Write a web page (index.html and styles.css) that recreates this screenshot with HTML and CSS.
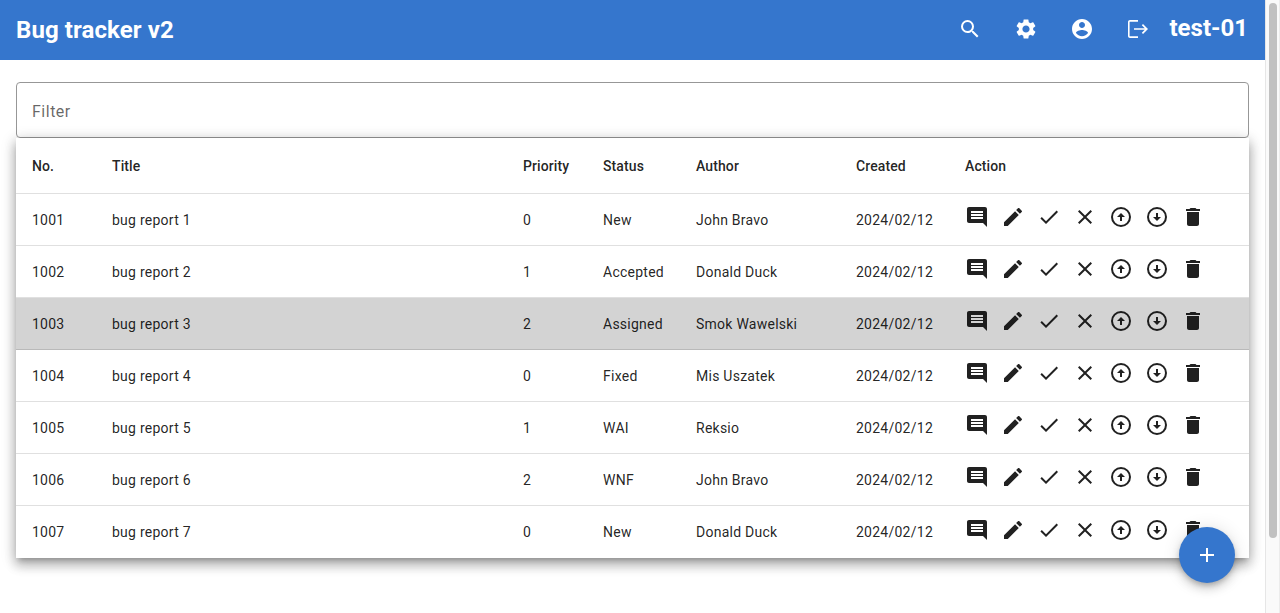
FILE: index.html
```html
<!DOCTYPE html>
<html lang="en">
<head>
<meta charset="utf-8">
<title>Bug tracker v2</title>
<link rel="stylesheet" href="styles.css">
</head>
<body>
<svg class="sprite" aria-hidden="true">
  <symbol id="comment" viewBox="0 0 24 24"><path d="M21.99 4c0-1.1-.89-2-1.99-2H4c-1.1 0-2 .9-2 2v12c0 1.100.9 2 2 2h14l4 4-.01-18zM18 14H6v-2h12v2zm0-3H6V9h12v2zm0-3H6V6h12v2z"/></symbol>
  <symbol id="edit" viewBox="0 0 24 24"><path d="M3 17.250V21h3.750L17.810 9.940l-3.750-3.750L3 17.250zM20.710 7.040c.39-.39.39-1.020 0-1.410l-2.340-2.340c-.39-.39-1.020-.39-1.410 0l-1.830 1.830 3.750 3.750 1.830-1.830z"/></symbol>
  <symbol id="check" viewBox="0 0 24 24"><path d="M9 16.170L4.830 12l-1.420 1.410L9 19 21 7l-1.410-1.410z"/></symbol>
  <symbol id="close" viewBox="0 0 24 24"><path d="M19 6.410L17.590 5 12 10.590 6.410 5 5 6.410 10.590 12 5 17.590 6.410 19 12 13.410 17.590 19 19 17.590 13.410 12z"/></symbol>
  <symbol id="up" viewBox="0 0 24 24"><circle cx="12" cy="12" r="9" fill="none" stroke="currentColor" stroke-width="2"/><path d="M11 12v4h2v-4h3l-4-4-4 4z"/></symbol>
  <symbol id="down" viewBox="0 0 24 24"><circle cx="12" cy="12" r="9" fill="none" stroke="currentColor" stroke-width="2"/><path d="M11 8v4H8l4 4 4-4h-3V8z"/></symbol>
  <symbol id="delete" viewBox="0 0 24 24"><path d="M6 19c0 1.100.9 2 2 2h8c1.100 0 2-.9 2-2V7H6v12zM19 4h-3.500l-1-1h-5l-1 1H5v2h14V4z"/></symbol>
</svg>
<div class="window">
  <div class="page">
    <header class="toolbar">
      <h1 class="brand">Bug tracker v2</h1>
      <nav class="tools">
        <svg class="icon" viewBox="0 0 24 24"><path d="M15.500 14h-.79l-.28-.27A6.471 6.471 0 0 0 16 9.500 6.500 6.500 0 1 0 9.500 16c1.610 0 3.090-.59 4.230-1.570l.27.28v.79l5 4.990L20.490 19l-4.990-5zm-6 0C7.010 14 5 11.990 5 9.500S7.010 5 9.500 5 14 7.010 14 9.500 11.990 14 9.500 14z"/></svg>
        <svg class="icon" viewBox="0 0 24 24"><path d="M19.140 12.940c.04-.3.06-.61.06-.94 0-.32-.02-.64-.07-.94l2.030-1.580c.18-.14.23-.41.12-.61l-1.920-3.320c-.12-.22-.37-.29-.59-.22l-2.390.96c-.5-.38-1.030-.7-1.620-.94l-.36-2.540c-.04-.24-.24-.41-.48-.41h-3.840c-.24 0-.43.17-.47.41l-.36 2.540c-.59.24-1.130.57-1.620.94l-2.390-.96c-.22-.08-.47 0-.59.22L2.740 8.870c-.12.21-.08.47.12.61l2.030 1.580c-.05.3-.09.63-.09.94s.02.64.07.94l-2.030 1.580c-.18.14-.23.41-.12.61l1.920 3.320c.12.22.37.29.59.22l2.390-.96c.5.38 1.030.7 1.620.94l.36 2.540c.05.24.24.41.48.41h3.840c.24 0 .44-.17.47-.41l.36-2.540c.59-.24 1.130-.56 1.620-.94l2.390.96c.22.08.47 0 .59-.22l1.920-3.320c.12-.22.07-.47-.12-.61l-2.010-1.580zM12 15.600c-1.980 0-3.600-1.620-3.600-3.600s1.620-3.600 3.600-3.600 3.600 1.620 3.600 3.600-1.620 3.600-3.600 3.600z"/></svg>
        <svg class="icon" viewBox="0 0 24 24"><path d="M12 2C6.480 2 2 6.480 2 12s4.480 10 10 10 10-4.480 10-10S17.520 2 12 2zm0 3c1.660 0 3 1.340 3 3s-1.340 3-3 3-3-1.340-3-3 1.340-3 3-3zm0 14.200c-2.500 0-4.710-1.280-6-3.220.03-1.990 4-3.080 6-3.080 1.990 0 5.970 1.090 6 3.080-1.290 1.940-3.500 3.220-6 3.220z"/></svg>
        <svg class="icon" viewBox="0 0 24 24"><path d="M17 7l-1.200 1.200L18.750 11.200H8v1.600h10.750l-2.950 3L17 17l5-5zM4 4.700h8V3H4c-1.100 0-2 .9-2 2v14c0 1.100.9 2 2 2h8v-1.700H4c-.2 0-.4-.2-.4-.4V5.100c0-.2.2-.4.4-.4z"/></svg>
      </nav>
      <h2 class="user">test-01</h2>
    </header>
    <main class="content">
      <label class="filter">Filter</label>
      <section class="table" id="table">
        <div class="row head"><span>No.</span><span>Title</span><span>Priority</span><span>Status</span><span>Author</span><span>Created</span><span>Action</span></div>
      </section>
    </main>
    <button class="fab" aria-label="Add"><svg class="icon" viewBox="0 0 24 24"><path d="M19 13h-6v6h-2v-6H5v-2h6V5h2v6h6v2z"/></svg></button>
  </div>
  <div class="scrollbar"><div class="thumb"></div></div>
</div>
<script src="app.js"></script>
</body>
</html>
```
FILE: styles.css
```css
* { box-sizing: border-box; }
body { margin: 0; overflow: hidden; background: #fff; color: rgba(0,0,0,.87); font-family: Roboto, sans-serif; }
.sprite { display: none; }
.icon { width: 24px; height: 24px; fill: currentColor; display: block; flex: none; }
.window { display: flex; height: 613px; }
.page { flex: 1; position: relative; overflow: hidden; }
.toolbar { height: 60px; padding: 0 17px 0 16px; display: flex; align-items: center; background: #3576cd; color: #fff; }
.brand, .user { margin: 0; font-size: 24px; line-height: 32px; font-weight: 700; white-space: nowrap; }
.brand { flex: 1; letter-spacing: .1px; }
.user { padding-bottom: 4px; letter-spacing: 0; }
.tools { display: flex; gap: 32px; padding-bottom: 2px; margin-right: 19px; }
.content { padding: 22px 16px 0; }
.filter { display: flex; align-items: center; height: 56px; padding: 3px 15px 0; border: 1px solid #979797; border-radius: 4px; font-size: 16px; letter-spacing: .5px; color: rgba(0,0,0,.6); }
.table { background: #fff; box-shadow: 0 5px 5px -3px rgba(0,0,0,.2), 0 8px 10px 1px rgba(0,0,0,.14), 0 3px 14px 2px rgba(0,0,0,.12), 0 3px 12px rgba(0,0,0,.14); }
.row { display: grid; grid-template-columns: 80px 411px 80px 93px 160px 109px 1fr; align-items: center; height: 52px; border-bottom: 1px solid rgba(0,0,0,.12); font-size: 14px; line-height: 20px; letter-spacing: .25px; }
.row > * { padding-left: 16px; white-space: nowrap; }
.row > span { letter-spacing: .25px; }
.row.head { height: 56px; font-weight: 500; line-height: 22px; }
.row.head > span { letter-spacing: .1px; }
.row.selected { background: #d3d3d3; }
.row:last-child { border-bottom: 0; }
.actions { display: flex; gap: 12px; padding-bottom: 5px; }
.fab { position: absolute; right: 30px; bottom: 30px; width: 56px; height: 56px; padding: 0; border: 0; border-radius: 50%; display: grid; place-items: center; background: #3576cd; color: #fff; box-shadow: 0 3px 5px -1px rgba(0,0,0,.2), 0 6px 10px rgba(0,0,0,.14), 0 1px 18px rgba(0,0,0,.12); }
.scrollbar { width: 15px; background: #fafafa; border-left: 1px solid #e6e6e6; border-right: 1px solid #ececec; padding: 3px 2px 0 3px; }
.thumb { width: 8px; height: 535px; border-radius: 4px; background: #c1c1c1; }
```
FILE: app.js
```javascript
const bugs = [
  [1001, 0, "New", "John Bravo"],
  [1002, 1, "Accepted", "Donald Duck"],
  [1003, 2, "Assigned", "Smok Wawelski"],
  [1004, 0, "Fixed", "Mis Uszatek"],
  [1005, 1, "WAI", "Reksio"],
  [1006, 2, "WNF", "John Bravo"],
  [1007, 0, "New", "Donald Duck"]
];
const actions = ["comment", "edit", "check", "close", "up", "down", "delete"]
  .map(name => `<svg class="icon"><use href="#${name}"/></svg>`).join("");
document.getElementById("table").insertAdjacentHTML("beforeend", bugs.map(([no, priority, status, author], i) =>
  `<div class="row${no === 1003 ? " selected" : ""}"><span>${no}</span><span>bug report ${i + 1}</span><span>${priority}</span><span>${status}</span><span>${author}</span><span>2024/02/12</span><div class="actions">${actions}</div></div>`).join(""));
```
